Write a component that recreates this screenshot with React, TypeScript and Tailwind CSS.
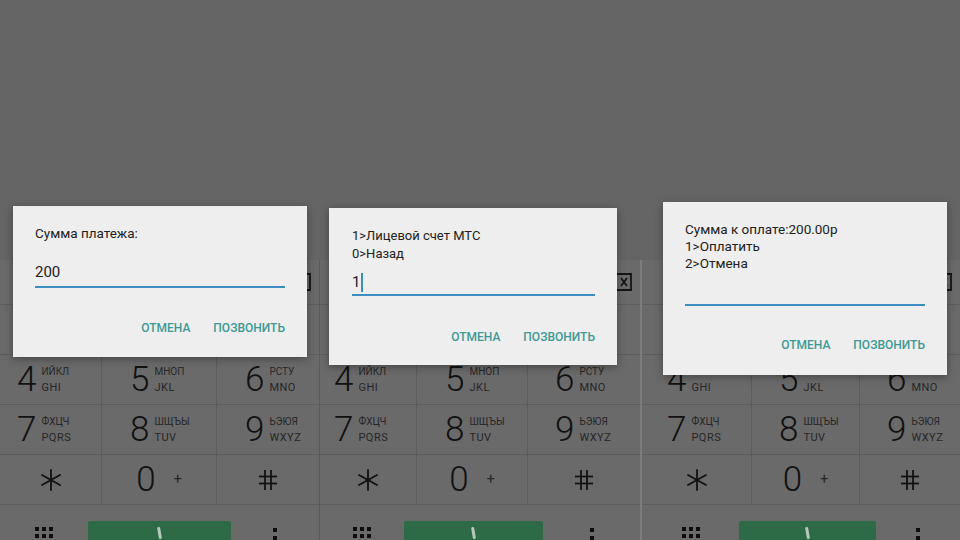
import React from "react";

type Key = { d: string; c?: string; l?: string };

// first row sits under the dialogs, only its cells are visible
const rows: Key[][] = [
  [{ d: "4", c: "ИЙКЛ", l: "GHI" }, { d: "5", c: "МНОП", l: "JKL" }, { d: "6", c: "РСТУ", l: "MNO" }],
  [{ d: "7", c: "ФХЦЧ", l: "PQRS" }, { d: "8", c: "ШЩЪЫ", l: "TUV" }, { d: "9", c: "ЬЭЮЯ", l: "WXYZ" }],
];

function Star() {
  return (
    <svg width="22" height="22" viewBox="0 0 22 22" stroke="#111" strokeWidth="1.8" strokeLinecap="round">
      <line x1="11" y1="1" x2="11" y2="21" />
      <line x1="2" y1="6" x2="20" y2="16" />
      <line x1="2" y1="16" x2="20" y2="6" />
    </svg>
  );
}

function Hash() {
  return (
    <svg width="20" height="22" viewBox="0 0 20 22" stroke="#111" strokeWidth="1.8">
      <line x1="7" y1="1" x2="7" y2="21" />
      <line x1="13" y1="1" x2="13" y2="21" />
      <line x1="1" y1="7.5" x2="19" y2="7.5" />
      <line x1="1" y1="14.5" x2="19" y2="14.5" />
    </svg>
  );
}

function Backspace() {
  return (
    <svg width="22" height="18" viewBox="0 0 22 18" fill="none" stroke="#151515" strokeWidth="1.8">
      <path d="M7 1h14v16H7L1 9z" />
      <path d="M11 5l6 8M17 5l-6 8" />
    </svg>
  );
}

function DialDots() {
  return (
    <div className="grid grid-cols-3 gap-[3px]">
      {Array.from({ length: 9 }).map((_, i) => (
        <div key={i} className="w-[4px] h-[4px] bg-[#0e0e0e]" />
      ))}
    </div>
  );
}

function Panel({
  cols,
  pads,
  leftW,
  btnW,
  border,
  children,
}: {
  cols: string;
  pads: string[];
  leftW: string;
  btnW: string;
  border: string;
  children: React.ReactNode;
}) {
  return (
    <div className="relative w-[320px] h-[540px] flex flex-col bg-[#656565] overflow-hidden">
      <div className="h-[260px] shrink-0" />
      <div className={"flex-1 flex flex-col bg-[#6a6a6a] " + border}>
        <div className="h-[45px] shrink-0 flex items-center justify-end pr-[8px] border-b border-[#5d5d5d]">
          <Backspace />
        </div>
        <div className={"h-[50px] shrink-0 grid border-b border-[#5d5d5d] " + cols}>
          <div className="border-r border-[#5d5d5d]" />
          <div className="border-r border-[#5d5d5d]" />
          <div />
        </div>
        {rows.map((r, ri) => (
          <div key={ri} className={"h-[50px] shrink-0 grid border-b border-[#5d5d5d] " + cols}>
            {r.map((k, ki) => (
              <div key={ki} className={"flex items-center border-[#5d5d5d] " + (ki < 2 ? "border-r " : "") + pads[ki]}>
                <span className="text-[35px] leading-none font-light text-[#111]">{k.d}</span>
                <div className="ml-[5px] flex flex-col leading-[16px] text-[#262626]">
                  <span className="text-[10px]">{k.c}</span>
                  <span className="text-[11px] tracking-[0.5px]">{k.l}</span>
                </div>
              </div>
            ))}
          </div>
        ))}
        <div className={"h-[50px] shrink-0 grid border-b border-[#5d5d5d] " + cols}>
          <div className="flex items-center justify-center border-r border-[#5d5d5d]">
            <Star />
          </div>
          <div className="flex items-center justify-center border-r border-[#5d5d5d]">
            <span className="text-[35px] leading-none font-light text-[#111]">0</span>
            <span className="ml-[18px] text-[14px] text-[#262626]">+</span>
          </div>
          <div className="flex items-center justify-center">
            <Hash />
          </div>
        </div>
        <div className="flex-1 flex items-start">
          <div className={"flex justify-center pt-[22px] " + leftW}>
            <DialDots />
          </div>
          <div className={"mt-[16px] h-[30px] rounded-[2px] bg-[#2c6b45] flex justify-center pt-[6px] " + btnW}>
            <div className="w-[3px] h-[12px] rounded-full bg-[#b8c8bc] rotate-[-10deg]" />
          </div>
          <div className="flex-1 flex flex-col items-center gap-[4px] pt-[23px]">
            <div className="w-[4px] h-[4px] bg-[#0e0e0e]" />
            <div className="w-[4px] h-[4px] bg-[#0e0e0e]" />
          </div>
        </div>
      </div>
      {children}
    </div>
  );
}

function Buttons() {
  return (
    <div className="flex justify-end gap-[23px] text-[12px] leading-[16px] font-medium text-[#3c9a95]">
      <span>ОТМЕНА</span>
      <span>ПОЗВОНИТЬ</span>
    </div>
  );
}

export default function App() {
  return (
    <div className="w-[960px] h-[540px] flex bg-[#656565] font-[Roboto,'Liberation_Sans',sans-serif]">
      <Panel
        cols="grid-cols-[102px_115px_1fr]"
        pads={["pl-[17px]", "pl-[28px]", "pl-[28px]"]}
        leftW="w-[88px]"
        btnW="w-[143px]"
        border="border-r border-[#5a5a5a]"
      >
        <div className="absolute left-[13px] top-[206px] w-[294px] h-[151px] bg-[#eeeeee] shadow-[0_2px_8px_rgba(0,0,0,0.35)] px-[22px] pt-[18px] text-[#212121]">
          <div className="text-[13.5px] leading-[18px]">Сумма платежа:</div>
          <div className="mt-[20px] text-[15px] leading-[20px] pb-[4px] border-b-2 border-[#3a8fc2]">200</div>
          <div className="mt-[32px]">
            <Buttons />
          </div>
        </div>
      </Panel>
      <Panel
        cols="grid-cols-[97px_111px_1fr]"
        pads={["pl-[14px]", "pl-[28px]", "pl-[27px]"]}
        leftW="w-[84px]"
        btnW="w-[139px]"
        border=""
      >
        <div className="absolute left-[9px] top-[208px] w-[288px] h-[157px] bg-[#eeeeee] shadow-[0_2px_8px_rgba(0,0,0,0.35)] pl-[23px] pr-[22px] pt-[19px] text-[#212121]">
          <div className="text-[13px] leading-[17.5px]">
            <div>1&gt;Лицевой счет МТС</div>
            <div>0&gt;Назад</div>
          </div>
          <div className="mt-[10px] text-[15px] leading-[20px] pb-[2px] border-b-2 border-[#3a8fc2] flex items-center">
            1<span className="ml-[1px] w-[1.5px] h-[19px] bg-[#2f8fc6]" />
          </div>
          <div className="mt-[33px]">
            <Buttons />
          </div>
        </div>
      </Panel>
      <Panel
        cols="grid-cols-[110px_108px_1fr]"
        pads={["pl-[25px]", "pl-[27px]", "pl-[27px]"]}
        leftW="w-[97px]"
        btnW="w-[137px]"
        border="border-l-2 border-[#7c7c7c]"
      >
        <div className="absolute left-[23px] top-[202px] w-[284px] h-[173px] bg-[#eeeeee] shadow-[0_2px_8px_rgba(0,0,0,0.35)] px-[22px] pt-[19px] text-[#212121]">
          <div className="text-[13.5px] leading-[17px]">
            <div>Сумма к оплате:200.00р</div>
            <div>1&gt;Оплатить</div>
            <div>2&gt;Отмена</div>
          </div>
          <div className="mt-[12px] h-[22px] border-b-2 border-[#3a8fc2]" />
          <div className="mt-[31px]">
            <Buttons />
          </div>
        </div>
      </Panel>
    </div>
  );
}
